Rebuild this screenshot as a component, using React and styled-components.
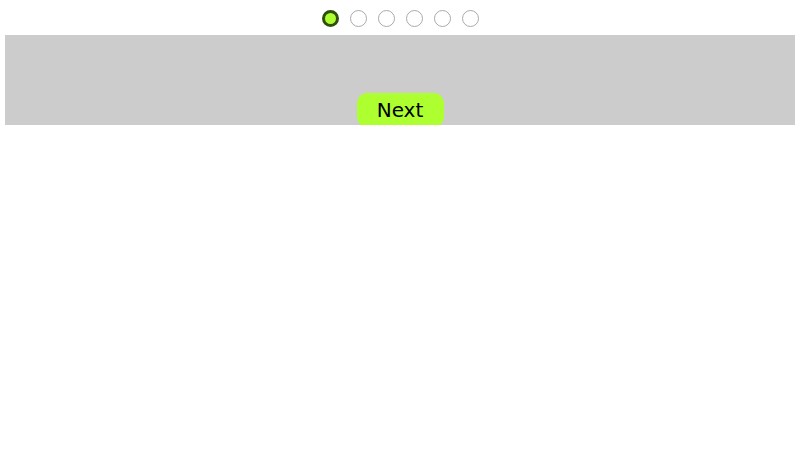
import React, { useState } from 'react'
import styled, { createGlobalStyle } from 'styled-components'

const GlobalStyle = createGlobalStyle`
  body {
    margin: 0;
    background: #fff;
    font-family: "DejaVu Sans", sans-serif;
  }
`

const Page = styled.div`
  padding: 0 5px;
`

const Dots = styled.ul`
  list-style: none;
  margin: 0;
  padding: 10px 0 8px;
  display: flex;
  justify-content: center;
  gap: 11px;
`

const Dot = styled.li`
  width: 17px;
  height: 17px;
  box-sizing: border-box;
  border-radius: 50%;
  background: ${p => (p.$active ? '#adff2f' : '#fff')};
  border: ${p => (p.$active ? '3px solid #2f4f0a' : '1px solid #aaa')};
`

const Panel = styled.div`
  box-sizing: border-box;
  height: 90px;
  padding-top: 58px;
  background: #ccc;
  display: flex;
  justify-content: center;
  align-items: flex-start;
  overflow: visible;
`

const NextButton = styled.button`
  flex: none;
  width: 87px;
  height: 34px;
  border: none;
  border-radius: 10px;
  background: #adff2f;
  color: #000;
  font-family: "DejaVu Sans", sans-serif;
  font-size: 20px;
  line-height: 1;
  padding: 0 0 1px;
  cursor: pointer;
`

const steps = [0, 1, 2, 3, 4, 5]

export default function App() {
  const [step, setStep] = useState(0)
  return (
    <Page>
      <GlobalStyle />
      <Dots>
        {steps.map(s => (
          <Dot key={`dot-${s}`} $active={s === step} />
        ))}
      </Dots>
      <Panel>
        <NextButton onClick={() => setStep((step + 1) % steps.length)}>Next</NextButton>
      </Panel>
    </Page>
  )
}
